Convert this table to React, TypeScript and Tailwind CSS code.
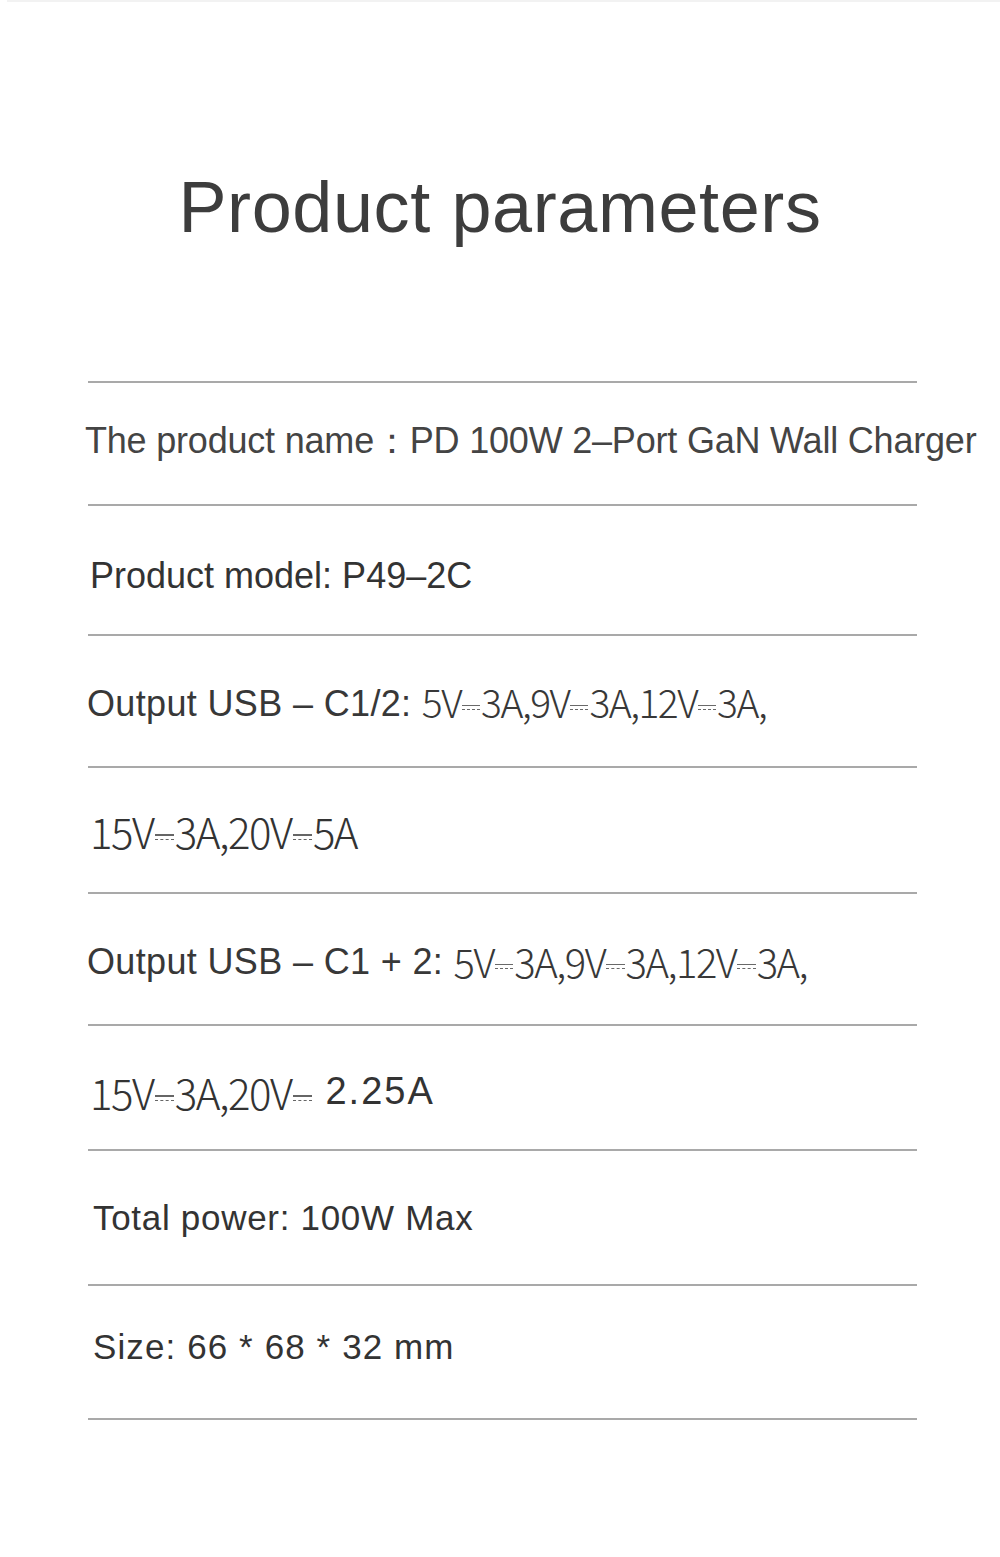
import React from "react";

function DC() {
  return (
    <span className="inline-flex flex-col justify-center mx-[1px] align-middle w-[0.46em] h-[0.3em] opacity-75">
      <span className="block w-full h-[1.5px] bg-current" />
      <span className="block w-full mt-[3px] border-t-[1.5px] border-dashed border-current" />
    </span>
  );
}

function Line() {
  return <div className="h-[2px] bg-[#a9a9a9]" />;
}

function Thin({ children }: { children: React.ReactNode }) {
  return (
    <span className="font-light tracking-[-1.5px] font-['Noto_Sans_CJK_SC','Noto_Sans',sans-serif]">
      {children}
    </span>
  );
}

export default function App() {
  return (
    <div className="w-[1000px] h-[1557px] bg-white text-[#333] overflow-hidden font-['Liberation_Sans',Arial,sans-serif]">
      <div className="h-[2px] ml-[7px] bg-[#f2f2f2]" />
      <div className="pt-[165px] h-[379px]">
        <h1 className="text-center text-[72px] leading-[80px] text-[#3d3d3d] tracking-[0.6px]">
          Product parameters
        </h1>
      </div>
      <div className="ml-[88px] w-[829px]">
        <Line />
        <div className="h-[121px] flex items-center pb-[5px] -ml-[3px] whitespace-nowrap text-[36px] tracking-[-0.2px] text-[#444]">
          The product name：PD 100W 2–Port GaN Wall Charger
        </div>
        <Line />
        <div className="h-[128px] flex items-center pt-[11px] ml-[2px] whitespace-nowrap text-[36px] text-[#333]">
          Product model: P49–2C
        </div>
        <Line />
        <div className="h-[130px] flex items-center pt-[5px] -ml-[1px] whitespace-nowrap text-[36px] text-[#383838]">
          <span className="tracking-[0.35px]">Output USB – C1/2:&nbsp;</span>
          <span className="text-[39px]">
            <Thin>
              5V<DC />3A,9V<DC />3A,12V<DC />3A,
            </Thin>
          </span>
        </div>
        <Line />
        <div className="h-[124px] flex items-center ml-[2px] whitespace-nowrap text-[42px] text-[#333]">
          <Thin>
            15V<DC />3A,20V<DC />5A
          </Thin>
        </div>
        <Line />
        <div className="h-[130px] flex items-center pt-[6px] -ml-[1px] whitespace-nowrap text-[36px] text-[#383838]">
          <span className="tracking-[0.35px]">Output USB – C1 + 2:&nbsp;</span>
          <span className="text-[40px]">
            <Thin>
              5V<DC />3A,9V<DC />3A,12V<DC />3A,
            </Thin>
          </span>
        </div>
        <Line />
        <div className="h-[123px] flex items-center pt-[7px] ml-[2px] whitespace-nowrap text-[42px] text-[#333]">
          <Thin>
            15V<DC />3A,20V<DC />
          </Thin>
          <span className="text-[38px] tracking-[2px]">&nbsp;2.25A</span>
        </div>
        <Line />
        <div className="h-[133px] flex items-center pt-[2px] ml-[5px] whitespace-nowrap text-[35px] text-[#333] tracking-[0.7px]">
          Total power: 100W Max
        </div>
        <Line />
        <div className="h-[132px] flex items-center pb-[9px] ml-[5px] whitespace-nowrap text-[35px] text-[#333] tracking-[1.1px]">
          Size: 66 * 68 * 32 mm
        </div>
        <Line />
      </div>
    </div>
  );
}
